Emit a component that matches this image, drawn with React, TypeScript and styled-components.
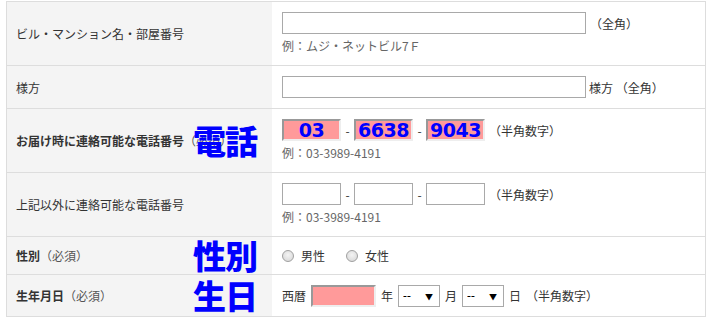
import styled, { createGlobalStyle } from "styled-components";

const GlobalStyle = createGlobalStyle`
  body {
    margin: 0;
    background: #fff;
    font-family: "Noto Sans CJK JP", "Noto Sans", sans-serif;
    font-size: 12px;
    color: #333;
  }
`;

export default function App() {
  return (
    <>
      <GlobalStyle />
      <Page>
        <FormTable>
          <Row $height={63}>
            <LabelCell>ビル・マンション名・部屋番号</LabelCell>
            <FieldCell>
              <FieldLine>
                <TextInput $width={304} />
                <Note>（全角）</Note>
              </FieldLine>
              <Hint>例：ムジ・ネットビル7Ｆ</Hint>
            </FieldCell>
          </Row>

          <Row $height={42}>
            <LabelCell>様方</LabelCell>
            <FieldCell>
              <FieldLine $gap={3}>
                <TextInput $width={304} />
                <span>様方 （全角）</span>
              </FieldLine>
            </FieldCell>
          </Row>

          <Row $height={63}>
            <LabelCell $bold>
              <LabelText>
                お届け時に連絡可能な電話番号<Required>（必須）</Required>
              </LabelText>
              <Stamp>電話</Stamp>
            </LabelCell>
            <FieldCell>
              <FieldLine>
                <PhoneInput defaultValue="03" $filled />
                <Dash>-</Dash>
                <PhoneInput defaultValue="6638" $filled />
                <Dash>-</Dash>
                <PhoneInput defaultValue="9043" $filled />
                <Note>（半角数字）</Note>
              </FieldLine>
              <Hint>例：03-3989-4191</Hint>
            </FieldCell>
          </Row>

          <Row $height={63}>
            <LabelCell>上記以外に連絡可能な電話番号</LabelCell>
            <FieldCell>
              <FieldLine>
                <PhoneInput />
                <Dash>-</Dash>
                <PhoneInput />
                <Dash>-</Dash>
                <PhoneInput />
                <Note>（半角数字）</Note>
              </FieldLine>
              <Hint>例：03-3989-4191</Hint>
            </FieldCell>
          </Row>

          <Row $height={37}>
            <LabelCell $bold>
              性別<Required>（必須）</Required>
              <Stamp>性別</Stamp>
            </LabelCell>
            <FieldCell>
              <RadioGroup>
                <RadioLabel>
                  <Radio type="radio" name="sex" />
                  男性
                </RadioLabel>
                <RadioLabel>
                  <Radio type="radio" name="sex" />
                  女性
                </RadioLabel>
              </RadioGroup>
            </FieldCell>
          </Row>

          <Row $height={41}>
            <LabelCell $bold>
              生年月日<Required>（必須）</Required>
              <Stamp>生日</Stamp>
            </LabelCell>
            <FieldCell>
              <FieldLine $gap={5}>
                <span>西暦</span>
                <YearInput />
                <span>年</span>
                <SelectWrap>
                  <Select defaultValue="--">
                    <option>--</option>
                  </Select>
                  <Arrow>▼</Arrow>
                </SelectWrap>
                <span>月</span>
                <SelectWrap>
                  <Select defaultValue="--">
                    <option>--</option>
                  </Select>
                  <Arrow>▼</Arrow>
                </SelectWrap>
                <span>日</span>
                <span>（半角数字）</span>
              </FieldLine>
            </FieldCell>
          </Row>
        </FormTable>
      </Page>
    </>
  );
}

const Page = styled.div`
  padding: 1px 0 0 6px;
`;

const FormTable = styled.div`
  width: 700px;
  box-sizing: border-box;
  border: 1px solid #dddddd;
  border-bottom: none;
`;

const Row = styled.div<{ $height: number }>`
  display: grid;
  grid-template-columns: 265px 1fr;
  height: ${(p) => p.$height}px;
  border-bottom: 1px solid #dddddd;
`;

const LabelCell = styled.div<{ $bold?: boolean }>`
  position: relative;
  display: flex;
  align-items: center;
  padding-left: 9px;
  background: #f4f4f4;
  color: #333;
  font-weight: ${(p) => (p.$bold ? 700 : 400)};
  white-space: nowrap;
`;

const LabelText = styled.span`
  display: block;
  max-width: 220px;
  overflow: hidden;
`;

const Required = styled.span`
  font-weight: 400;
  color: #555;
`;

const Stamp = styled.span`
  position: absolute;
  left: 186px;
  top: 50%;
  transform: translateY(-52%);
  font-size: 33px;
  font-weight: 900;
  color: #0000ff;
  letter-spacing: -1px;
  line-height: 1;
  z-index: 1;
`;

const FieldCell = styled.div`
  display: flex;
  flex-direction: column;
  justify-content: center;
  gap: 3px;
  padding-left: 10px;
  background: #fff;
`;

const FieldLine = styled.div<{ $gap?: number }>`
  display: flex;
  align-items: center;
  gap: ${(p) => p.$gap ?? 0}px;
  height: 22px;
  color: #333;
`;

const Note = styled.span`
  margin-left: 4px;
`;

const Hint = styled.div`
  line-height: 18px;
  color: #666;
`;

const TextInput = styled.input<{ $width: number }>`
  width: ${(p) => p.$width}px;
  height: 22px;
  box-sizing: border-box;
  border: 1px solid #a9a9a9;
  padding: 0 4px;
  background: #fff;
  outline: none;
`;

const PhoneInput = styled.input<{ $filled?: boolean }>`
  width: 59px;
  height: 22px;
  box-sizing: border-box;
  padding: 0;
  outline: none;
  text-align: center;
  font-family: "DejaVu Sans", sans-serif;
  font-size: 19px;
  font-weight: 700;
  letter-spacing: -0.5px;
  color: #0000ff;
  background: ${(p) => (p.$filled ? "#ff9a9a" : "#fff")};
  border: ${(p) => (p.$filled ? "2px solid #999" : "1px solid #a9a9a9")};
  border-right-color: ${(p) => (p.$filled ? "#eee" : "#a9a9a9")};
  border-bottom-color: ${(p) => (p.$filled ? "#eee" : "#a9a9a9")};
`;

const Dash = styled.span`
  width: 13px;
  text-align: center;
`;

const YearInput = styled.input`
  width: 65px;
  height: 22px;
  box-sizing: border-box;
  padding: 0;
  outline: none;
  background: #ff9a9a;
  border: 2px solid #999;
  border-right-color: #eee;
  border-bottom-color: #eee;
`;

const SelectWrap = styled.div`
  position: relative;
  width: 42px;
  height: 22px;
`;

const Select = styled.select`
  appearance: none;
  width: 100%;
  height: 100%;
  box-sizing: border-box;
  border: 1px solid #a9a9a9;
  border-radius: 0;
  background: #fff;
  padding: 0 0 0 4px;
  font-family: "Noto Sans", sans-serif;
  font-size: 12px;
  color: #000;
  outline: none;
`;

const Arrow = styled.span`
  position: absolute;
  right: 7px;
  top: 50%;
  transform: translateY(-50%);
  font-size: 8px;
  color: #000;
  pointer-events: none;
`;

const RadioGroup = styled.div`
  display: flex;
  align-items: center;
  gap: 21px;
  color: #333;
`;

const RadioLabel = styled.label`
  display: flex;
  align-items: center;
  gap: 7px;
`;

const Radio = styled.input`
  appearance: none;
  margin: 0;
  width: 12px;
  height: 12px;
  border-radius: 50%;
  border: 1px solid #a0a0a0;
  background: radial-gradient(circle at 50% 40%, #f4f4f4, #d4d4d4);
  box-sizing: border-box;
`;
